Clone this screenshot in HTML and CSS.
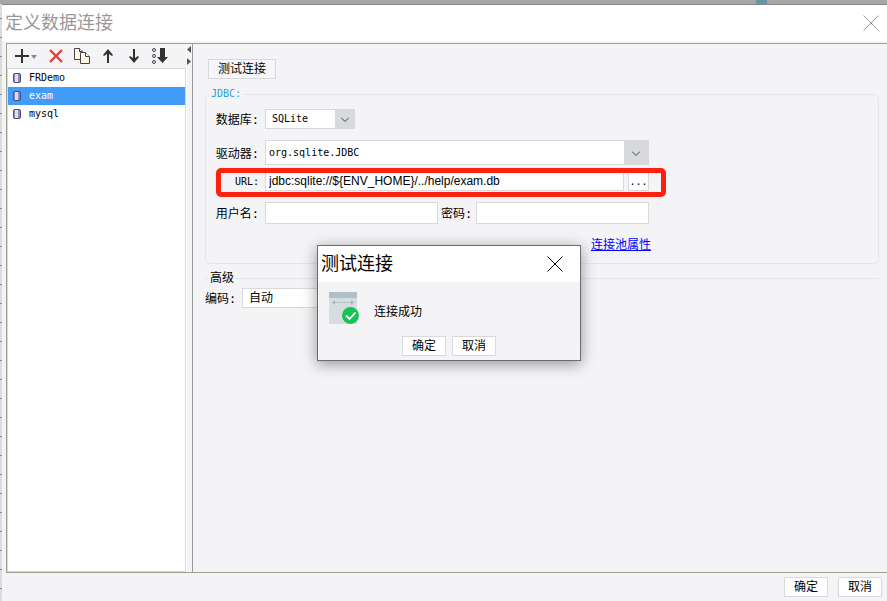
FILE: index.html
```html
<!DOCTYPE html>
<html lang="zh-CN">
<head>
    <meta charset="UTF-8">
    <meta name="viewport" content="width=device-width, initial-scale=1.0">
    <title>定义数据连接</title>
    <link rel="stylesheet" href="styles.css">
</head>
<body>
    <div class="window">
        <header class="title-bar">
            <h1>定义数据连接</h1>
            <button class="close-button" aria-label="关闭">
                <svg width="16" height="16" viewBox="0 0 16 16"><path d="M.5 .5l15 15M15.5 .5l-15 15" /></svg>
            </button>
        </header>

        <main class="workspace">
            <!-- Connection list -->
            <aside class="sidebar">
                <div class="toolbar">
                    <button class="add-button" aria-label="新增">
                        <svg width="24" height="16" viewBox="0 0 24 16">
                            <path d="M1 8h14M8 1v14" stroke="#333" stroke-width="2" />
                            <path d="M17 7h6l-3 4z" fill="#888" />
                        </svg>
                    </button>
                    <button aria-label="删除">
                        <svg width="16" height="16" viewBox="0 0 16 16"><path d="M2 2l12 12M14 2L2 14" stroke="#e63c37" stroke-width="2.4" /></svg>
                    </button>
                    <button aria-label="复制">
                        <svg width="16" height="16" viewBox="0 0 16 16" fill="#fff6e3" stroke="#444">
                            <path d="M.5 .5h5l3 3v8h-8z" />
                            <path d="M5.500 .5v3h3" fill="#fff" />
                            <path d="M6.500 4.500h5l4 4v7h-9z" />
                            <path d="M11.500 4.500v4h4" fill="#fff" />
                        </svg>
                    </button>
                    <button aria-label="上移">
                        <svg width="16" height="16" viewBox="0 0 16 16"><path d="M8 1l5 6-1 1-3-2v9H7V6L4 8 3 7z" fill="#333" /></svg>
                    </button>
                    <button aria-label="下移">
                        <svg width="16" height="16" viewBox="0 0 16 16"><path d="M8 15l5-6-1-1-3 2V1H7v9L4 8 3 9z" fill="#333" /></svg>
                    </button>
                    <button aria-label="排序">
                        <svg width="16" height="16" viewBox="0 0 16 16">
                            <g fill="none" stroke="#444"><circle cx="2" cy="2" r="1.500" /><circle cx="2" cy="8" r="1.500" /><circle cx="2" cy="14" r="1.500" /></g>
                            <path d="M8 0h5v9h3l-5.500 6L5 9h3z" fill="#333" />
                        </svg>
                    </button>
                </div>
                <ul class="connection-list">
                    <li>
                        <svg class="db-icon" width="8" height="10" viewBox="0 0 8 10"><rect x=".5" y=".5" width="7" height="9" rx="1.500" fill="#8c8cb8" stroke="#4c4c78" /><path d="M2 1h3v8H2z" fill="#dde" /></svg>
                        FRDemo
                    </li>
                    <li class="selected">
                        <svg class="db-icon" width="8" height="10" viewBox="0 0 8 10"><rect x=".5" y=".5" width="7" height="9" rx="1.500" fill="#8c8cb8" stroke="#4c4c78" /><path d="M2 1h3v8H2z" fill="#dde" /></svg>
                        exam
                    </li>
                    <li>
                        <svg class="db-icon" width="8" height="10" viewBox="0 0 8 10"><rect x=".5" y=".5" width="7" height="9" rx="1.500" fill="#8c8cb8" stroke="#4c4c78" /><path d="M2 1h3v8H2z" fill="#dde" /></svg>
                        mysql
                    </li>
                </ul>
            </aside>
            <div class="splitter">
                <svg width="4" height="20" viewBox="0 0 4 20" fill="#555"><path d="M4 0v7L0 3.500zM0 12v7l4-3.500z" /></svg>
            </div>

            <!-- Connection settings -->
            <form class="settings">
                <button type="button" class="button test-button">测试连接</button>

                <fieldset class="group">
                    <legend>JDBC:</legend>
                    <div class="row">
                        <label for="database">数据库:</label>
                        <span class="select-box database-box">
                            <select id="database"><option>SQLite</option></select>
                            <svg class="arrow" width="8" height="5" viewBox="0 0 8 5"><path d="M0 .5l4 4 4-4" /></svg>
                        </span>
                    </div>
                    <div class="row">
                        <label for="driver">驱动器:</label>
                        <span class="select-box driver-box">
                            <select id="driver"><option>org.sqlite.JDBC</option></select>
                            <svg class="arrow" width="8" height="5" viewBox="0 0 8 5"><path d="M0 .5l4 4 4-4" /></svg>
                        </span>
                    </div>
                    <div class="row">
                        <label for="url" class="latin">URL:</label>
                        <input type="text" id="url" class="url" value="jdbc:sqlite://${ENV_HOME}/../help/exam.db">
                        <button type="button" class="button more-button">...</button>
                        <span class="highlight"></span>
                    </div>
                    <div class="row">
                        <label for="user">用户名:</label>
                        <input type="text" id="user">
                        <label for="password" class="password-label">密码:</label>
                        <input type="password" id="password">
                    </div>
                    <div class="row link-row">
                        <a href="#">连接池属性</a>
                    </div>
                </fieldset>

                <fieldset class="group advanced">
                    <legend>高级</legend>
                    <div class="row">
                        <label for="encoding">编码:</label>
                        <span class="select-box encoding-box">
                            <select id="encoding"><option>自动</option></select>
                        </span>
                    </div>
                </fieldset>
            </form>
        </main>

        <footer class="footer">
            <button class="button">确定</button>
            <button class="button">取消</button>
        </footer>
    </div>

    <!-- Test result -->
    <div class="dialog" role="dialog" aria-labelledby="dialogTitle">
        <div class="dialog-title">
            <h2 id="dialogTitle">测试连接</h2>
            <button class="close-button" aria-label="关闭">
                <svg width="16" height="16" viewBox="0 0 16 16"><path d="M.5 .5l15 15M15.5 .5l-15 15" /></svg>
            </button>
        </div>
        <div class="dialog-message">
            <svg width="30" height="32" viewBox="0 0 30 32">
                <path d="M0 0h28v32H0z" fill="#d5dde1" />
                <path d="M0 0h28v6H0z" fill="#b2bfc7" />
                <path d="M6 10.500h16" stroke="#a9b7bf" stroke-dasharray="2 1" />
                <path d="M3 10.500L6 8v5zM25 10.500L22 8v5z" fill="#a9b7bf" />
                <circle cx="21.500" cy="23.500" r="8.500" fill="#18c254" />
                <path d="M17 23.500l3.500 3.500 6-6.500" fill="none" stroke="#fff" stroke-width="1.800" />
            </svg>
            <p>连接成功</p>
        </div>
        <div class="dialog-buttons">
            <button class="button">确定</button>
            <button class="button">取消</button>
        </div>
    </div>
</body>
</html>
```

FILE: styles.css
```css
* {
    box-sizing: border-box;
}
body {
    margin: 0;
    height: 100vh;
    padding: 4px 0 0 2px;
    font-family: "DejaVu Sans Mono", "Noto Sans CJK SC", monospace;
    font-size: 12px;
    line-height: 16px;
    color: #000;
    background:
        linear-gradient(#6694a0, #6694a0) 756px 0 / 11px 4px no-repeat,
        linear-gradient(#a6a6a6, #a6a6a6) 0 0 / 100% 4px no-repeat,
        repeating-linear-gradient(#dcdce0 0 18px, #888 18px 19px);
}
button, input, select {
    font: inherit;
    color: inherit;
    margin: 0;
    padding: 0;
    border: 0;
    background: none;
}
svg {
    display: block;
    flex: none;
}
h1, h2 {
    margin: 0;
    font-size: 18px;
    line-height: 24px;
    font-weight: normal;
}
.window {
    display: flex;
    flex-direction: column;
    height: 100%;
    background: #f4f4f7;
    border-top: 1px solid #888;
}
.title-bar {
    display: flex;
    align-items: center;
    justify-content: space-between;
    height: 36px;
    padding: 0 8px 0 3px;
    background: #fff;
    color: #999;
}
.close-button {
    color: inherit;
}
.close-button path {
    fill: none;
    stroke: currentColor;
}
.workspace {
    display: flex;
    flex: 1;
    min-height: 0;
    margin: 2px 0 0 4px;
    border: 1px solid #a0a091;
    border-right: 0;
}

/* Left side */
.sidebar {
    display: flex;
    flex-direction: column;
    width: 179px;
}
.toolbar {
    display: flex;
    align-items: center;
    gap: 10px;
    height: 24px;
    padding-left: 7px;
}
.connection-list {
    flex: 1;
    margin: 0;
    padding: 0;
    list-style: none;
    font-size: 10px;
    background: #fff;
    border: 1px solid #d8d9dd;
}
.connection-list li {
    display: flex;
    align-items: center;
    gap: 8px;
    height: 18px;
    padding-left: 5px;
}
.connection-list .selected {
    background: #419bf9;
    color: #fff;
}
.splitter {
    display: flex;
    justify-content: flex-end;
    width: 7px;
    padding: 2px 1px 0 0;
    border-left: 1px solid #fff;
    border-right: 1px solid #999;
}

/* Right side */
.settings {
    flex: 1;
    padding: 15px 8px 0 12px;
}
.button {
    width: 44px;
    height: 20px;
    padding-top: 1px;
    line-height: 17px;
    background: #fff;
    border: 1px solid #d8d9dd;
}
.test-button {
    display: block;
    width: 68px;
    margin-left: 3px;
    background: #f6f6f8;
}
.group {
    margin: 9px 0 0;
    padding: 9px 0 8px;
    min-width: 0;
    border: 1px solid #e6e6ea;
    border-radius: 5px;
}
.group legend {
    margin-left: 3px;
    padding: 0 2px;
    font-size: 10px;
    line-height: 12px;
    color: #1a9fe0;
}
.row {
    position: relative;
    display: flex;
    align-items: center;
    gap: 6px;
    max-width: 443px;
    height: 20px;
    margin-bottom: 11px;
}
.row:nth-of-type(2) {
    height: 25px;
    margin-bottom: 6px;
}
.row:nth-of-type(4) {
    height: 22px;
}
.row label {
    flex: none;
    width: 53px;
    padding-top: 2px;
    text-align: right;
    white-space: nowrap;
}
.row .latin {
    font-size: 10px;
}
.row .password-label {
    width: 29px;
    margin-left: -3px;
}
.row input {
    flex: 1;
    min-width: 0;
    height: 100%;
    padding: 0 3px;
    background: #fff;
    border: 1px solid #d8d9dd;
}
.row .url {
    font-family: "Liberation Sans", Arial, sans-serif;
}
.select-box {
    position: relative;
    display: flex;
    height: 100%;
    background: #fff;
    border: 1px solid #d8d9dd;
}
.select-box select {
    flex: 1;
    padding: 0 3px;
    appearance: none;
    font-size: 10px;
}
.database-box {
    width: 90px;
}
.database-box select,
.encoding-box select {
    padding-left: 6px;
}
.driver-box {
    flex: 1;
}
.database-box select,
.driver-box select {
    background: linear-gradient(#d8d9dd, #d8d9dd) right / 19px 100% no-repeat;
}
.driver-box select {
    background-size: 24px 100%;
}
.arrow {
    position: absolute;
    right: 5px;
    top: 50%;
    margin-top: -2px;
    fill: none;
    stroke: #444;
    pointer-events: none;
}
.driver-box .arrow {
    right: 8px;
}
.row .more-button {
    width: 21px;
    font-size: 10px;
    margin-left: -2px;
}
.highlight {
    position: absolute;
    top: -3px;
    right: -17px;
    bottom: -6px;
    left: 10px;
    border: 5px solid #ff200f;
    border-radius: 5px;
    pointer-events: none;
}
.link-row {
    justify-content: flex-end;
    max-width: 445px;
    margin-bottom: 0;
}
.link-row a {
    color: #00f;
}
.advanced {
    margin-top: 6px;
    padding: 2px 0 0;
    border-width: 1px 0 0;
    border-radius: 0;
}
.advanced legend {
    font-size: 12px;
    line-height: 16px;
    color: #000;
}
.advanced label {
    width: 31px;
}
.encoding-box {
    width: 120px;
}
.encoding-box select {
    font-size: 12px;
}
.footer {
    display: flex;
    justify-content: flex-end;
    gap: 10px;
    padding: 4px 5px;
}

/* Dialog over the window */
.dialog {
    position: absolute;
    top: 245px;
    left: 317px;
    width: 264px;
    background: #f4f4f7;
    border: 1px solid #6c6c70;
    box-shadow: 0 3px 14px rgba(0, 0, 0, 0.4);
}
.dialog-title {
    display: flex;
    align-items: center;
    justify-content: space-between;
    height: 36px;
    padding: 0 17px 0 3px;
    background: #fff;
}
.dialog-message {
    display: flex;
    align-items: center;
    gap: 15px;
    padding: 10px 11px 0;
}
.dialog-message p {
    margin: 8px 0 0;
}
.dialog-buttons {
    display: flex;
    justify-content: center;
    gap: 6px;
    padding: 12px 0 4px;
}
```
